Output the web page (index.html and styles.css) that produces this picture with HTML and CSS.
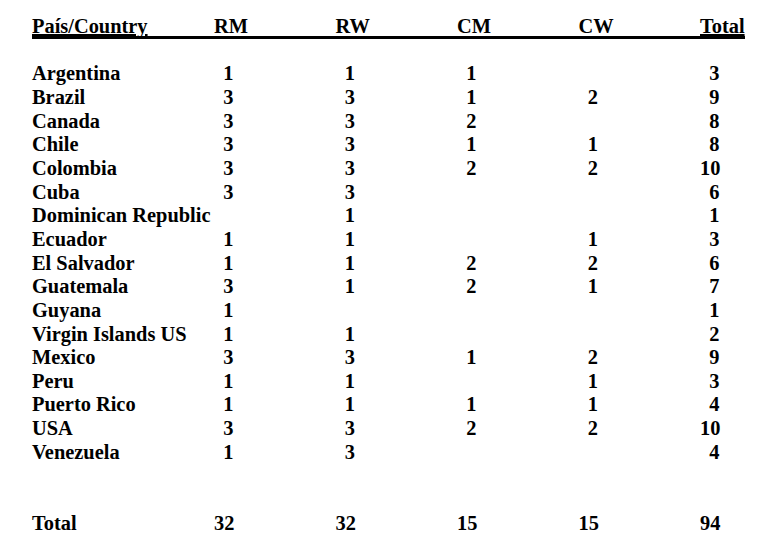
FILE: index.html
```html
<!DOCTYPE html>
<html lang="es">
<head>
<meta charset="utf-8">
<title>País/Country</title>
<link rel="stylesheet" href="styles.css">
</head>
<body>
<div class="table">
  <div class="row head">
    <div class="c u">País/Country</div>
    <div class="c">RM</div>
    <div class="c">RW</div>
    <div class="c">CM</div>
    <div class="c">CW</div>
    <div class="c u">Total</div>
  </div>
  <div class="row gap1"></div>
  <div class="row"><div class="c">Argentina</div><div class="n">1</div><div class="n">1</div><div class="n">1</div><div class="n"></div><div class="n">3</div></div>
  <div class="row"><div class="c">Brazil</div><div class="n">3</div><div class="n">3</div><div class="n">1</div><div class="n">2</div><div class="n">9</div></div>
  <div class="row"><div class="c">Canada</div><div class="n">3</div><div class="n">3</div><div class="n">2</div><div class="n"></div><div class="n">8</div></div>
  <div class="row"><div class="c">Chile</div><div class="n">3</div><div class="n">3</div><div class="n">1</div><div class="n">1</div><div class="n">8</div></div>
  <div class="row"><div class="c">Colombia</div><div class="n">3</div><div class="n">3</div><div class="n">2</div><div class="n">2</div><div class="n">10</div></div>
  <div class="row"><div class="c">Cuba</div><div class="n">3</div><div class="n">3</div><div class="n"></div><div class="n"></div><div class="n">6</div></div>
  <div class="row"><div class="c">Dominican Republic</div><div class="n"></div><div class="n">1</div><div class="n"></div><div class="n"></div><div class="n">1</div></div>
  <div class="row"><div class="c">Ecuador</div><div class="n">1</div><div class="n">1</div><div class="n"></div><div class="n">1</div><div class="n">3</div></div>
  <div class="row"><div class="c">El Salvador</div><div class="n">1</div><div class="n">1</div><div class="n">2</div><div class="n">2</div><div class="n">6</div></div>
  <div class="row"><div class="c">Guatemala</div><div class="n">3</div><div class="n">1</div><div class="n">2</div><div class="n">1</div><div class="n">7</div></div>
  <div class="row"><div class="c">Guyana</div><div class="n">1</div><div class="n"></div><div class="n"></div><div class="n"></div><div class="n">1</div></div>
  <div class="row"><div class="c">Virgin Islands US</div><div class="n">1</div><div class="n">1</div><div class="n"></div><div class="n"></div><div class="n">2</div></div>
  <div class="row"><div class="c">Mexico</div><div class="n">3</div><div class="n">3</div><div class="n">1</div><div class="n">2</div><div class="n">9</div></div>
  <div class="row"><div class="c">Peru</div><div class="n">1</div><div class="n">1</div><div class="n"></div><div class="n">1</div><div class="n">3</div></div>
  <div class="row"><div class="c">Puerto Rico</div><div class="n">1</div><div class="n">1</div><div class="n">1</div><div class="n">1</div><div class="n">4</div></div>
  <div class="row"><div class="c">USA</div><div class="n">3</div><div class="n">3</div><div class="n">2</div><div class="n">2</div><div class="n">10</div></div>
  <div class="row"><div class="c">Venezuela</div><div class="n">1</div><div class="n">3</div><div class="n"></div><div class="n"></div><div class="n">4</div></div>
  <div class="row gap2"></div>
  <div class="row"><div class="c">Total</div><div class="n">32</div><div class="n">32</div><div class="n">15</div><div class="n">15</div><div class="n">94</div></div>
</div>
</body>
</html>
```

FILE: styles.css
```css
html, body {
  margin: 0;
  background: #ffffff;
}
body {
  padding: 15.2px 0 0 32px;
  font-family: "Liberation Serif", "Times New Roman", serif;
  font-weight: bold;
  font-size: 20.4px;
  color: #000000;
}
.table {
  width: 713px;
}
.row {
  display: grid;
  grid-template-columns: 182px 121.5px 121.5px 121.5px 121.5px 45px;
  line-height: 23.65px;
  height: 23.65px;
  white-space: nowrap;
}
.row.head {
  height: 20.85px;
  border-bottom: 3px solid #000000;
}
.gap1 {
  height: 23.45px;
}
.gap2 {
  height: 47.3px;
}
.u {
  text-decoration: underline;
  text-decoration-thickness: 1.5px;
}
.n {
  width: 19.5px;
  text-align: right;
}
```
